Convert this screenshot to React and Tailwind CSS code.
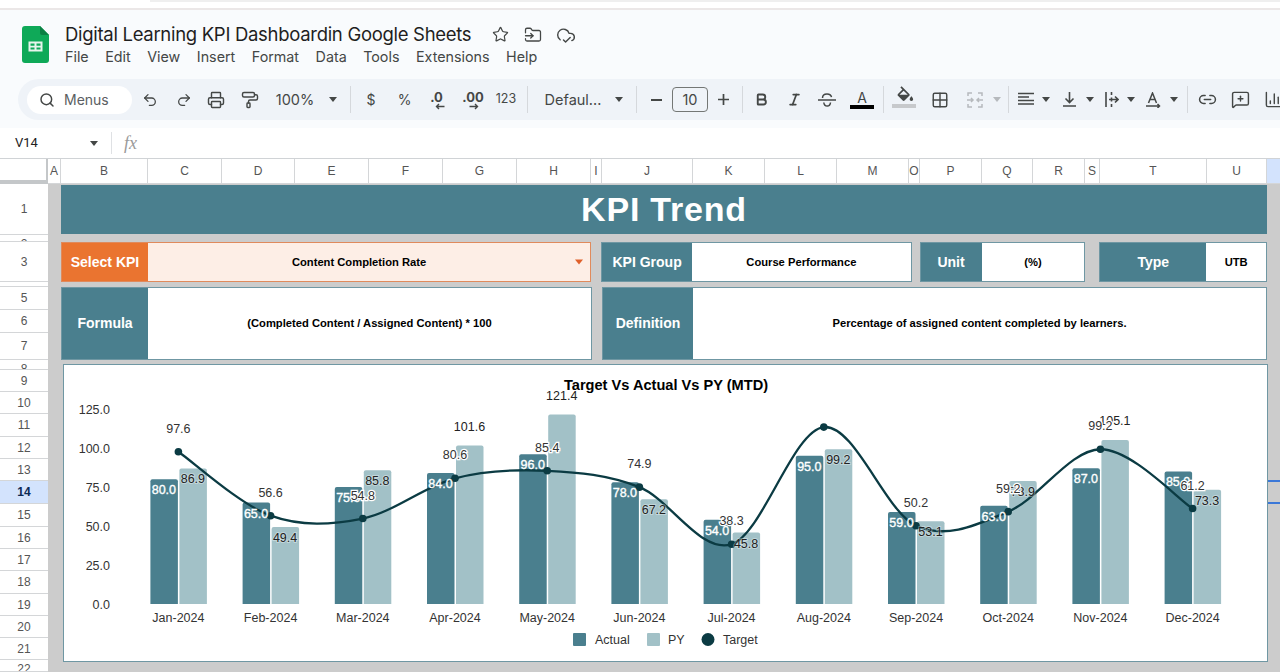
import { useMemo } from 'react';
import { Search, Undo2, Redo2, Printer, PaintRoller, Star, FolderInput, CloudCheck, Bold, Italic, Grid2x2, Link2, MessageSquarePlus, ChartColumn } from 'lucide-react';

const columns = [
  { label: 'A', width: 'w-[13px]' },
  { label: 'B', width: 'w-[87px]' },
  { label: 'C', width: 'w-[74px]' },
  { label: 'D', width: 'w-[73px]' },
  { label: 'E', width: 'w-[74px]' },
  { label: 'F', width: 'w-[74px]' },
  { label: 'G', width: 'w-[74px]' },
  { label: 'H', width: 'w-[74px]' },
  { label: 'I', width: 'w-[11px]' },
  { label: 'J', width: 'w-[91px]' },
  { label: 'K', width: 'w-[72px]' },
  { label: 'L', width: 'w-[72px]' },
  { label: 'M', width: 'w-[72px]' },
  { label: 'O', width: 'w-[11px]' },
  { label: 'P', width: 'w-[62px]' },
  { label: 'Q', width: 'w-[51px]' },
  { label: 'R', width: 'w-[52px]' },
  { label: 'S', width: 'w-[15px]' },
  { label: 'T', width: 'w-[107px]' },
  { label: 'U', width: 'w-[60px]' },
];

const rows = [
  { label: '1', height: 'h-[51px]' },
  { label: '2', height: 'h-[7px]', clip: true },
  { label: '3', height: 'h-[40px]' },
  { label: '4', height: 'h-[5px]', clip: true },
  { label: '5', height: 'h-[23px]' },
  { label: '6', height: 'h-[23px]' },
  { label: '7', height: 'h-[27px]' },
  { label: '8', height: 'h-[10px]', clip: true },
  { label: '9', height: 'h-[22px]' },
  { label: '10', height: 'h-[22px]' },
  { label: '11', height: 'h-[23px]' },
  { label: '12', height: 'h-[22px]' },
  { label: '13', height: 'h-[22px]' },
  { label: '14', height: 'h-[23px]', active: true },
  { label: '15', height: 'h-[23px]' },
  { label: '16', height: 'h-[22px]' },
  { label: '17', height: 'h-[22px]' },
  { label: '18', height: 'h-[23px]' },
  { label: '19', height: 'h-[22px]' },
  { label: '20', height: 'h-[22px]' },
  { label: '21', height: 'h-[22px]' },
  { label: '22', height: 'h-[12px]', clip: true },
];

// 차트 데이터
const chartData = [
  { month: 'Jan-2024', actual: 80, py: 86.9, target: 97.6 },
  { month: 'Feb-2024', actual: 65, py: 49.4, target: 56.6 },
  { month: 'Mar-2024', actual: 75, py: 85.8, target: 54.8 },
  { month: 'Apr-2024', actual: 84, py: 101.6, target: 80.6 },
  { month: 'May-2024', actual: 96, py: 121.4, target: 85.4 },
  { month: 'Jun-2024', actual: 78, py: 67.2, target: 74.9 },
  { month: 'Jul-2024', actual: 54, py: 45.8, target: 38.3 },
  { month: 'Aug-2024', actual: 95, py: 99.2, target: 113.4, noLabel: true },
  { month: 'Sep-2024', actual: 59, py: 53.1, target: 50.2 },
  { month: 'Oct-2024', actual: 63, py: 78.9, target: 59.2 },
  { month: 'Nov-2024', actual: 87, py: 105.1, target: 99.2 },
  { month: 'Dec-2024', actual: 85, py: 73.3, target: 61.2 },
];

const AXIS = [125, 100, 75, 50, 25, 0];
// svg 좌표는 카드 기준 (카드 왼쪽 위 = 64, 365)
const toY = (v) => 239 - v * 1.56;
const toX = (i) => 114.4 + i * 92.2;

function SheetsLogo() {
  return (
    <svg width="27" height="37" viewBox="0 0 27 37">
      <path d="M3 0h15l9 9v25a3 3 0 0 1-3 3H3a3 3 0 0 1-3-3V3a3 3 0 0 1 3-3z" fill="#0fa958" />
      <path d="M18 0l9 9h-7a2 2 0 0 1-2-2z" fill="#0b8043" />
      <path d="M6.5 15.5h14v10h-14zM8.5 17.5v2.2h4v-2.2zM14.5 17.5v2.2h4v-2.2zM8.5 21.4v2.2h4v-2.2zM14.5 21.4v2.2h4v-2.2z" fill="#e8f5ec" fillRule="evenodd" />
    </svg>
  );
}

function Caret({ color = 'border-t-[#444746]' }) {
  return <span className={`block shrink-0 w-0 h-0 border-x-[4.5px] border-x-transparent border-t-[5px] ${color}`} />;
}

function Sep() {
  return <span className="block w-px h-[27px] bg-[#d5d8dc]" />;
}

function Slot({ className, children }) {
  return <div className={`flex items-center justify-center shrink-0 h-full ${className}`}>{children}</div>;
}

function Toolbar() {
  const ic = 'text-[#444746]';
  return (
    <div className="flex items-center h-[41px] ml-[18px] w-[1290px] pl-[9px] bg-[#eff3f8] rounded-[21px] text-[#444746] text-[14px]">
      <div className="flex items-center w-[105px] h-[28px] bg-white rounded-[14px] pl-[12px] gap-[9px] shrink-0">
        <Search size={16} strokeWidth={2.2} className={ic} />
        <span className="text-[14px] text-[#5b5e62]">Menus</span>
      </div>
      <Slot className="w-[36px]"><Undo2 size={16} strokeWidth={1.9} className={ic} /></Slot>
      <Slot className="w-[31px]"><Redo2 size={16} strokeWidth={1.9} className={ic} /></Slot>
      <Slot className="w-[34px]"><Printer size={18} strokeWidth={1.9} className={ic} /></Slot>
      <Slot className="w-[33px]"><PaintRoller size={18} strokeWidth={1.9} className={ic} /></Slot>
      <Slot className="w-[58px]"><span className="text-[14.5px]">100%</span></Slot>
      <Slot className="w-[18px]"><Caret /></Slot>
      <Slot className="w-[16px]"><Sep /></Slot>
      <Slot className="w-[26px]"><span className="text-[14px]">$</span></Slot>
      <Slot className="w-[41px]"><span className="text-[14px]">%</span></Slot>
      <Slot className="w-[23px]">
        <span className="relative text-[13px] font-bold leading-none -mt-[4px]">.0
          <svg className="absolute left-[5px] top-[12px]" width="10" height="7" viewBox="0 0 10 7"><path d="M9.5 3.5H1.5M4 1L1.5 3.5 4 6" fill="none" stroke="#444746" strokeWidth="1.4" /></svg>
        </span>
      </Slot>
      <Slot className="w-[50px]">
        <span className="relative text-[13px] font-bold leading-none -mt-[4px]">.00
          <svg className="absolute left-[7px] top-[12px]" width="10" height="7" viewBox="0 0 10 7"><path d="M0.5 3.5H8.5M6 1L8.5 3.5 6 6" fill="none" stroke="#444746" strokeWidth="1.4" /></svg>
        </span>
      </Slot>
      <Slot className="w-[16px]"><span className="text-[12.5px]">123</span></Slot>
      <Slot className="w-[26px]"><Sep /></Slot>
      <Slot className="w-[66px]"><span className="text-[14.5px]">Defaul...</span></Slot>
      <Slot className="w-[26px]"><Caret /></Slot>
      <Slot className="w-[8px]"><Sep /></Slot>
      <Slot className="w-[32px]"><span className="block w-[11px] h-[2px] bg-[#444746]" /></Slot>
      <div className="flex items-center justify-center shrink-0 w-[36px] h-[25px] rounded-[4px] border border-[#747775] text-[14.5px]">10</div>
      <Slot className="w-[30px]">
        <svg width="13" height="13" viewBox="0 0 13 13"><path d="M6.5 1v11M1 6.5h11" stroke="#444746" strokeWidth="1.7" /></svg>
      </Slot>
      <Slot className="w-[8px]"><Sep /></Slot>
      <Slot className="w-[30px]"><Bold size={15} strokeWidth={3} className={ic} /></Slot>
      <Slot className="w-[36px]"><Italic size={15} strokeWidth={2.8} className={ic} /></Slot>
      <Slot className="w-[30px]">
        <svg width="18" height="16" viewBox="0 0 18 16" fill="none" stroke="#444746" strokeWidth="1.5">
          <path d="M0 8h18M4.5 6C4.5 3.5 6.5 2 9 2s4.2 1.2 4.5 3.2M5.8 10.5c.2 2 1.5 3.5 3.4 3.5s3.1-1.2 3.3-3.5" />
        </svg>
      </Slot>
      <Slot className="w-[40px]">
        <div className="flex flex-col items-center">
          <span className="text-[14px] leading-[14px]">A</span>
          <span className="block w-[24px] h-[4px] bg-black" />
        </div>
      </Slot>
      <Slot className="w-[2px]"><Sep /></Slot>
      <Slot className="w-[40px]">
        <div className="flex flex-col items-center gap-[2px] -mt-[5px]">
          <svg width="19" height="16" viewBox="0 0 22 18">
            <path d="M16.56 8.94L7.62 0 6.21 1.41l2.38 2.38-5.15 5.15c-.59.59-.59 1.54 0 2.12l5.5 5.5c.29.29.68.44 1.06.44s.77-.15 1.06-.44l5.5-5.5c.59-.58.59-1.53 0-2.12zM5.21 10L10 5.21 14.79 10H5.21zM19 11.5s-2 2.17-2 3.5c0 1.1.9 2 2 2s2-.9 2-2c0-1.33-2-3.5-2-3.5z" fill="#444746" fillRule="evenodd" />
          </svg>
          <span className="block w-[24px] h-[4px] bg-[#c7c9cc]" />
        </div>
      </Slot>
      <Slot className="w-[32px]"><Grid2x2 size={18} strokeWidth={1.9} className={ic} /></Slot>
      <Slot className="w-[37px]">
        <svg width="18" height="18" viewBox="0 0 18 18" fill="none" stroke="#b6b9bd" strokeWidth="1.5"><path d="M6 2H2v3M2 13v3h4M12 2h4v3M16 13v3h-4M1 9h6M5 7l2 2-2 2M17 9h-6M13 7l-2 2 2 2" /></svg>
      </Slot>
      <Slot className="w-[8px]"><Caret color="border-t-[#b6b9bd]" /></Slot>
      <Slot className="w-[14px]"><Sep /></Slot>
      <Slot className="w-[22px]">
        <svg width="16" height="15" viewBox="0 0 16 15" stroke="#444746" strokeWidth="1.6"><path d="M0 1.5h16M0 5h11M0 8.5h16M0 12h16" /></svg>
      </Slot>
      <Slot className="w-[18px]"><Caret /></Slot>
      <Slot className="w-[28px]">
        <svg width="13" height="15" viewBox="0 0 13 15" fill="none" stroke="#444746" strokeWidth="1.6"><path d="M6.5 0v10M2.5 6.5l4 4 4-4M0 14h13" /></svg>
      </Slot>
      <Slot className="w-[14px]"><Caret /></Slot>
      <Slot className="w-[30px]">
        <svg width="14" height="15" viewBox="0 0 14 15" fill="none" stroke="#444746" strokeWidth="1.6"><path d="M1 0v15M6.5 0v3M6.5 5.5v4M6.5 12v3M4 7.5h9M10 4.5l3 3-3 3" /></svg>
      </Slot>
      <Slot className="w-[8px]"><Caret /></Slot>
      <Slot className="w-[36px]">
        <svg width="15" height="16" viewBox="0 0 15 16" fill="none" stroke="#444746" strokeWidth="1.5"><path d="M2.5 11L6.5 1l4 10M4 7.5h5M0 14h13M11.5 12l2 2-2 2" /></svg>
      </Slot>
      <Slot className="w-[6px]"><Caret /></Slot>
      <Slot className="w-[20px]"><Sep /></Slot>
      <Slot className="w-[20px]"><Link2 size={19} strokeWidth={1.9} className={ic} /></Slot>
      <Slot className="w-[46px]"><MessageSquarePlus size={19} strokeWidth={1.8} className={ic} /></Slot>
      <Slot className="w-[20px]"><ChartColumn size={19} strokeWidth={1.8} className={ic} /></Slot>
    </div>
  );
}

function Chart() {
  const linePath = useMemo(() => {
    const pts = chartData.map((d, i) => [toX(i), toY(d.target)]);
    let path = `M${pts[0][0]} ${pts[0][1]}`;
    for (let i = 0; i < pts.length - 1; i++) {
      const p0 = pts[i - 1] || pts[i];
      const p1 = pts[i];
      const p2 = pts[i + 1];
      const p3 = pts[i + 2] || p2;
      const c1 = [p1[0] + (p2[0] - p0[0]) / 6, p1[1] + (p2[1] - p0[1]) / 6];
      const c2 = [p2[0] - (p3[0] - p1[0]) / 6, p2[1] - (p3[1] - p1[1]) / 6];
      path += ` C${c1[0]} ${c1[1]} ${c2[0]} ${c2[1]} ${p2[0]} ${p2[1]}`;
    }
    return path;
  }, []);

  const font = { fontFamily: '"Liberation Sans", Arial, sans-serif', fontSize: 12.5 };

  return (
    <svg width="1203" height="296" viewBox="0 0 1203 296" className="block">
      <g style={font}>
        <text x="602" y="25" textAnchor="middle" fontWeight="700" fontSize="14.6" fill="#000">Target Vs Actual Vs PY (MTD)</text>
        {AXIS.map((v) => (
          <text key={v} x="46" y={toY(v) + 4.5} textAnchor="end" fill="#333">{v.toFixed(1)}</text>
        ))}
        {chartData.map((d, i) => {
          const x = toX(i);
          return (
            <g key={d.month}>
              <path d={`M${x - 28} 239V${toY(d.actual) + 2}q0-2 2-2h23.5q2 0 2 2V239z`} fill="#4a7f8e" />
              <path d={`M${x + 1} 239V${toY(d.py) + 2}q0-2 2-2h23.5q2 0 2 2V239z`} fill="#a2c1c7" />
              <text x={x} y="257" textAnchor="middle" fill="#333">{d.month}</text>
            </g>
          );
        })}
        <path d={linePath} fill="none" stroke="#0b3b43" strokeWidth="2.3" />
        {chartData.map((d, i) => (
          <circle key={d.month} cx={toX(i)} cy={toY(d.target)} r="3.8" fill="#0b3b43" />
        ))}
        {chartData.map((d, i) => {
          const x = toX(i);
          const pyTop = toY(d.py);
          const pyOutside = pyTop < 82;
          return (
            <g key={d.month}>
              <text x={x - 14.5} y={toY(d.actual) + 15} textAnchor="middle" fill="#fff" stroke="#fff" strokeWidth="0.35">{d.actual.toFixed(1)}</text>
              <text x={x + 14.5} y={pyOutside ? pyTop - 15 : pyTop + 15} textAnchor="middle" fill="#222" stroke="#ffffff" strokeOpacity={pyOutside ? 0 : 0.35} strokeWidth="2" paintOrder="stroke">{d.py.toFixed(1)}</text>
            </g>
          );
        })}
        {chartData.map((d, i) => (
          !d.noLabel && (
            <text key={d.month} x={toX(i)} y={toY(d.target) - 19} textAnchor="middle" fill="#333" stroke="#ffffff" strokeWidth="2.5" paintOrder="stroke">{d.target.toFixed(1)}</text>
          )
        ))}
        <rect x="509" y="268" width="13" height="13" rx="1" fill="#4a7f8e" />
        <text x="531" y="279" fill="#333">Actual</text>
        <rect x="583" y="268" width="13" height="13" rx="1" fill="#a2c1c7" />
        <text x="604" y="279" fill="#333">PY</text>
        <circle cx="644" cy="274.5" r="6.5" fill="#0b3b43" />
        <text x="659" y="279" fill="#333">Target</text>
      </g>
    </svg>
  );
}

function InfoCell({ label, value, labelWidth, className, valueClass = '', accent, children }) {
  return (
    <div className={`flex border ${accent ? 'border-[#e08a5c] bg-[#fdeee6]' : 'border-[#6f97a3] bg-white'} ${className}`}>
      <div className={`flex items-center justify-center shrink-0 text-white font-bold text-[14px] ${accent ? 'bg-[#ea7430]' : 'bg-[#4a7f8e]'} ${labelWidth}`}>{label}</div>
      <div className={`relative flex-1 flex items-center justify-center text-black font-bold text-[11.2px] ${valueClass}`}>
        {value}
        {children}
      </div>
    </div>
  );
}

export default function App() {
  return (
    <div className="w-[1280px] h-[672px] overflow-hidden bg-white text-[#1f1f1f] font-['Liberation_Sans',Arial,sans-serif]">
      {/* 브라우저 상단 띠 */}
      <div className="h-[10px] bg-white border-b-2 border-[#ebe7e7]">
        <div className="ml-[150px] h-[2px] bg-[#efefef]" />
      </div>

      {/* 문서 제목 / 메뉴 */}
      <div className="bg-[#f9fbfd] h-[118px]">
        <div className="flex h-[69px]">
          <div className="pl-[22px] pt-[16px] w-[65px] shrink-0"><SheetsLogo /></div>
          <div className="pt-[12px] font-['Inter',sans-serif]">
            <div className="flex items-center h-[25px]">
              <span className="text-[18.5px] tracking-[-0.3px] text-[#1f1f1f] w-[427px] whitespace-nowrap">Digital Learning KPI Dashboardin Google Sheets</span>
              <Star size={17} strokeWidth={1.7} className="text-[#444746]" />
              <FolderInput size={18} strokeWidth={1.7} className="text-[#444746] ml-[15px]" />
              <CloudCheck size={20} strokeWidth={1.7} className="text-[#444746] ml-[14px]" />
            </div>
            <div className="flex gap-[16.5px] text-[14.3px] text-[#444746] mt-[1px] leading-[18px]">
              <span>File</span><span>Edit</span><span>View</span><span>Insert</span><span>Format</span><span>Data</span><span>Tools</span><span>Extensions</span><span>Help</span>
            </div>
          </div>
        </div>
        <div className="font-['Inter',sans-serif]"><Toolbar /></div>
      </div>

      {/* 수식 입력줄 */}
      <div className="flex items-center h-[31px] bg-white border-b border-[#d0d3d6] font-['Roboto',sans-serif]">
        <span className="pl-[15px] w-[90px] text-[13px] text-[#222]">V14</span>
        <Caret />
        <span className="block w-px h-[22px] bg-[#dfe1e4] ml-[13px]" />
        <span className="ml-[12px] font-['Liberation_Serif',serif] italic text-[18px] text-[#9a9a9a]">fx</span>
      </div>

      {/* 열 머리글 */}
      <div className="flex h-[25px] bg-white text-[12px] text-[#555]">
        <div className="w-[48px] shrink-0 border-r-[2px] border-b-[4px] border-[#c4c7c9]" />
        {columns.map((c) => (
          <div key={c.label} className={`flex items-center justify-center shrink-0 border-r border-b border-[#d4d6d8] ${c.width}`}>{c.label}</div>
        ))}
        <div className="flex-1 bg-[#d3e3fd] border-b border-[#d4d6d8]" />
      </div>

      <div className="flex h-[488px]">
        {/* 행 머리글 */}
        <div className="w-[48px] shrink-0 bg-white text-[12px] text-[#555]">
          {rows.map((r) => (
            <div key={r.label} className={`flex justify-center overflow-hidden border-b border-[#d4d6d8] ${r.clip ? 'items-start' : 'items-center'} ${r.height} ${r.active ? 'bg-[#d3e3fd] font-bold text-[#0b2a55]' : ''}`}>{r.label}</div>
          ))}
        </div>

        {/* 대시보드 */}
        <div className="w-[1220px] shrink-0 bg-[#cccccc] pl-[13px] pt-[1px]">
          <div className="h-[49px] w-[1206px] bg-[#4a7f8e] flex items-center justify-center text-white font-bold text-[34px] tracking-[0.8px]">KPI Trend</div>

          <div className="flex mt-[8px] h-[40px] w-[1206px]">
            <InfoCell accent label="Select KPI" value="Content Completion Rate" labelWidth="w-[86px]" valueClass="pr-[20px]" className="w-[531px]">
              <span className="absolute right-[7px] top-1/2 -translate-y-1/2"><Caret color="border-t-[#e0602a]" /></span>
            </InfoCell>
            <InfoCell label="KPI Group" value="Course Performance" labelWidth="w-[90px]" className="w-[311px] ml-[10px]" />
            <InfoCell label="Unit" value="(%)" labelWidth="w-[61px]" className="w-[166px] ml-[8px]" />
            <InfoCell label="Type" value="UTB" labelWidth="w-[106px]" className="w-[168px] ml-[14px]" />
          </div>

          <div className="flex mt-[5px] h-[73px] w-[1206px]">
            <InfoCell label="Formula" value="(Completed Content / Assigned Content) * 100" labelWidth="w-[86px]" className="w-[531px]" />
            <InfoCell label="Definition" value="Percentage of assigned content completed by learners." labelWidth="w-[90px]" className="w-[665px] ml-[10px]" />
          </div>

          <div className="mt-[4px] ml-[2px] w-[1205px] h-[298px] bg-white border border-[#6f97a3]">
            <Chart />
          </div>
        </div>

        {/* 선택된 V14 셀 */}
        <div className="flex-1 bg-[#cccccc] flex flex-col">
          <div className="h-[296px]" />
          <div className="h-[24px] border-y-2 border-[#3b78d8]" />
        </div>
      </div>
    </div>
  );
}
